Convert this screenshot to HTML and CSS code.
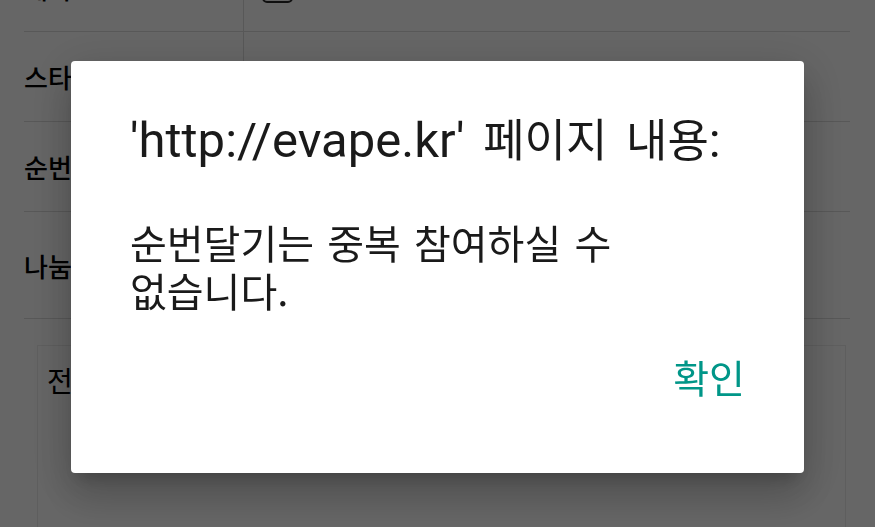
FILE: index.html
```html
<!DOCTYPE html>
<html lang="ko">
<head>
<meta charset="utf-8">
<title>evape.kr</title>
<link rel="stylesheet" href="styles.css">
</head>
<body>
<div class="page">
  <div class="form">
    <div class="row row-first">
      <div class="label">제목</div>
      <div class="field"><span class="checkbox"></span></div>
    </div>
    <div class="row">
      <div class="label">스타일</div>
      <div class="field"></div>
    </div>
    <div class="row">
      <div class="label">순번달기</div>
      <div class="field"></div>
    </div>
    <div class="row row-tall">
      <div class="label">나눔</div>
      <div class="field"></div>
    </div>
  </div>
  <div class="box">
    <div class="box-text">전체</div>
  </div>
</div>

<div class="overlay">
  <div class="dialog">
    <div class="dialog-title"><span class="latin">'http://evape.kr'</span> 페이지 내용<span class="latin">:</span></div>
    <div class="dialog-message">순번달기는 중복 참여하실 수 없습니다.</div>
    <div class="dialog-actions">
      <button class="dialog-btn" type="button">확인</button>
    </div>
  </div>
</div>
</body>
</html>
```

FILE: styles.css
```css
* { box-sizing: border-box; }
html, body {
  margin: 0;
  padding: 0;
  background: #fff;
  overflow: hidden;
  font-family: "Noto Sans CJK KR", "Noto Sans", sans-serif;
}
.page {
  width: 875px;
  height: 527px;
  padding: 0 25px 0 24px;
  overflow: hidden;
}
.form {
  margin-top: -57px;
}
.row {
  display: flex;
  height: 89px;
  border-bottom: 1px solid #dcdcdc;
}
.row + .row { height: 90px; }
.row.row-tall { height: 107px; }
.label {
  width: 220px;
  border-right: 1px solid #dcdcdc;
  display: flex;
  align-items: center;
  font-size: 26px;
  font-weight: 500;
  color: #000;
  white-space: nowrap;
  overflow: hidden;
}
.field {
  flex: 1;
  display: flex;
  align-items: center;
  padding-left: 18px;
}
.checkbox {
  width: 31px;
  height: 31px;
  border: 2px solid #2a2a2a;
  border-radius: 5px;
  background: #f4f4f4;
  margin-top: 1px;
}
.box {
  margin: 26px 4px 0 13px;
  height: 260px;
  border: 1px solid #ececec;
  padding: 14px 9px;
}
.box-text {
  font-size: 28px;
  color: #000;
}
.overlay {
  position: fixed;
  inset: 0;
  background: rgba(0, 0, 0, 0.6);
  display: flex;
  align-items: flex-start;
  justify-content: center;
}
.dialog {
  margin-top: 61px;
  width: 733px;
  height: 412px;
  background: #fff;
  border-radius: 4px;
  padding: 51px 59px 0 59px;
  box-shadow: 0 24px 38px 3px rgba(0,0,0,0.14),
              0 9px 46px 8px rgba(0,0,0,0.12),
              0 11px 15px -7px rgba(0,0,0,0.2);
  display: flex;
  flex-direction: column;
}
.dialog-title {
  font-size: 45px;
  line-height: 52px;
  color: #1a1a1a;
  white-space: nowrap;
  word-spacing: 6px;
}
.latin {
  font-family: Roboto, "Noto Sans", sans-serif;
  font-size: 49px;
  line-height: 1;
  word-spacing: 0;
}
.dialog-message {
  margin-top: 53px;
  font-size: 40px;
  line-height: 48px;
  color: #1a1a1a;
  word-spacing: 2px;
  word-break: keep-all;
}
.dialog-actions {
  display: flex;
  justify-content: flex-end;
  margin-top: 40px;
}
.dialog-btn {
  border: 0;
  background: none;
  padding: 0;
  font-family: inherit;
  font-size: 39px;
  font-weight: 400;
  line-height: 44px;
  color: #009688;
}
```
